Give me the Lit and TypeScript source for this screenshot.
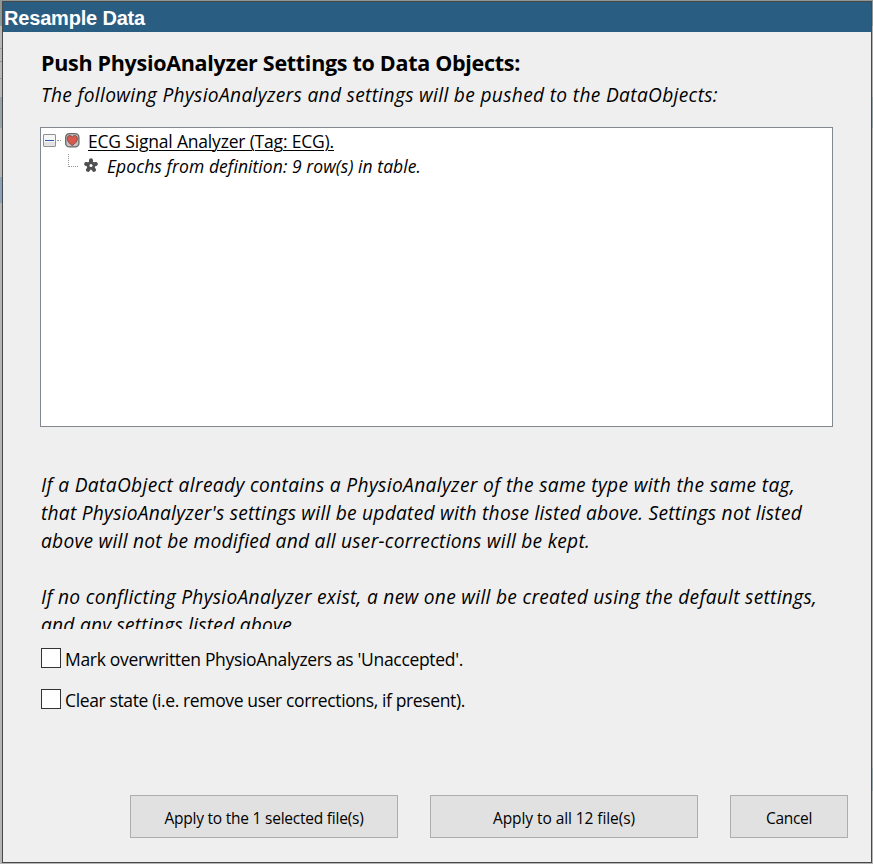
import { LitElement, html, css, svg } from "lit";
import { customElement, property } from "lit/decorators.js";

/** A single line of text, tracked so that it spans a given width. */
@customElement("text-line")
class TextLine extends LitElement {
  @property({ type: Number }) span = 0;

  static styles = css`
    :host { display: block; white-space: nowrap; }
    .line { display: inline-block; white-space: pre; }
  `;

  render() {
    return html`<span class="line"><slot></slot></span>`;
  }

  firstUpdated() {
    const line = this.renderRoot.querySelector(".line") as HTMLElement;
    const count = (this.textContent ?? "").trim().length;
    if (!this.span || !count) return;
    const spacing = (this.span - line.getBoundingClientRect().width) / count;
    line.style.letterSpacing = `${spacing.toFixed(4)}px`;
  }
}

@customElement("check-option")
class CheckOption extends LitElement {
  @property() label = "";
  @property({ type: Number }) span = 0;

  static styles = css`
    :host { display: flex; align-items: center; height: 24px; gap: 4px; }
    .box { box-sizing: border-box; width: 20px; height: 20px; border: 1px solid #333; background: #fff; margin-top: -3px; }
    .text { font-size: 17.5px; line-height: 24px; }
  `;

  render() {
    return html`<span class="box"></span><text-line class="text" .span=${this.span}>${this.label}</text-line>`;
  }
}

@customElement("push-button")
class PushButton extends LitElement {
  @property() label = "";
  @property({ type: Number }) span = 0;

  static styles = css`
    :host {
      box-sizing: border-box; display: flex; align-items: center; justify-content: center;
      height: 43px; border: 1px solid #adadad; background: #e1e1e1;
      font-size: 15.5px; line-height: 22px; padding-top: 2px;
    }
  `;

  render() {
    return html`<text-line .span=${this.span}>${this.label}</text-line>`;
  }
}

const toggle = svg`
  <rect x="0.5" y="0.5" width="12" height="12" rx="0.5" fill="#f6f6f6" stroke="#919191"/>
  <path d="M1 8h11v4H1z" fill="#e2e2e2"/>
  <path d="M2 6h9v1H2z" fill="#2f57b0"/>`;

const heart = svg`
  <rect x="0.7" y="0.7" width="13.2" height="13.2" rx="3.6" fill="#c4c4c4" stroke="#686868" stroke-width="1.3"/>
  <path d="M7.3 12.6C4.8 10.8 2.2 8.5 2.2 5.6 2.2 3.6 3.4 2.6 4.8 2.6c1.1 0 2 .6 2.5 1.6.5-1 1.4-1.6 2.5-1.6 1.4 0 2.6 1 2.6 3 0 2.9-2.6 5.2-5.1 7z" fill="#db584c" stroke="#75453f" stroke-width=".9"/>`;

const flower = svg`
  <g stroke="#505050" stroke-width="4" stroke-linecap="round">
    <path d="M7 7.4V2.2M7 7.4L2.2 6M7 7.4L11.8 6M7 7.4L4 11.8M7 7.4L10 11.8"/>
  </g>
  <circle cx="7" cy="7.4" r="4.2" fill="#505050"/>
  <circle cx="7" cy="7.4" r="1.5" fill="#fff"/>`;

@customElement("app-root")
class AppRoot extends LitElement {
  static styles = css`
    :host {
      box-sizing: border-box; display: block; width: 873px; height: 864px; overflow: hidden;
      padding: 1px 1px 1px 2px; color: #000;
      font-family: "Open Sans", "Noto Sans", sans-serif;
      background:
        linear-gradient(#8e9898 0 26px, #b0b0b0 26px 97px, #96a3a6 97px 128px, #b2b2b2 128px 768px, #96a8ac 768px 791px, #b5b5b5 791px) right / 1px 100% no-repeat,
        linear-gradient(#8e9898 0 26px, #b8b8b8 26px 48px, #999 48px 49px, #b8b8b8 49px 61px, #929292 61px 62px,
        #b8b8b8 62px 78px, #999 78px 79px, #b8b8b8 79px 97px, #96a3aa 97px 128px, #b5b5b5 128px 177px, #88a2b9 177px 203px, #b5b5b5 203px);
    }
    .window {
      box-sizing: border-box; height: 862px; border: 1px solid #484848; background: #efefef;
      display: flex; flex-direction: column;
    }
    .title {
      height: 30px; flex: none; background: #295e82; color: #fff; padding: 1px 0 0 1px; box-sizing: border-box;
      font: bold 20px/30px "Liberation Sans", sans-serif;
    }
    .body { flex: 1; display: flex; flex-direction: column; padding: 15px 23px 24px 37px; }
    .heading { font-size: 21.5px; line-height: 32px; font-weight: 700; padding-left: 1px; }
    .intro { font-size: 19.2px; line-height: 32px; font-style: italic; padding-left: 1px; }
    .tree {
      box-sizing: border-box; width: 793px; height: 300px; margin-top: 16px; flex: none;
      border: 1px solid #828790; background: #fff; padding-top: 1px; font-size: 17.5px; line-height: 25px;
    }
    .row { display: flex; height: 25px; align-items: flex-start; }
    .row svg { display: block; flex: none; }
    .toggle { margin: 5px 0 0 2px; }
    .dots { width: 4px; border-top: 1px dotted #999; margin-top: 11px; margin-left: 1px; }
    .heart { margin: 4px 0 0 4px; }
    .name { margin-left: 8px; }
    .name u { text-decoration-thickness: 1px; text-underline-offset: 2px; }
    .elbow { box-sizing: border-box; width: 10px; height: 13px; margin-left: 27px; border: dotted #999; border-width: 0 0 1px 1px; }
    .flower { margin: 4px 0 0 6px; }
    .detail { margin-left: 9px; font-style: italic; }
    .note {
      height: 158px; overflow: hidden; margin-top: 44px; padding-left: 1px; flex: none;
      font-size: 19.2px; line-height: 28px; font-style: italic;
    }
    .gap { height: 28px; }
    .options { display: flex; flex-direction: column; gap: 17px; padding: 18px 0 0 1px; }
    .buttons { display: flex; justify-content: flex-end; gap: 32px; margin-top: auto; }
    .wide { width: 268px; }
    .small { width: 118px; }
  `;

  render() {
    return html`
      <div class="window">
        <div class="title"><text-line span="141">Resample Data</text-line></div>
        <div class="body">
          <text-line class="heading" span="479">Push PhysioAnalyzer Settings to Data Objects:</text-line>
          <text-line class="intro" span="677">The following PhysioAnalyzers and settings will be pushed to the DataObjects:</text-line>
          <div class="tree">
            <div class="row">
              <svg class="toggle" width="13" height="13">${toggle}</svg>
              <span class="dots"></span>
              <svg class="heart" width="15" height="15">${heart}</svg>
              <text-line class="name" span="246"><u>ECG Signal Analyzer (Tag: ECG).</u></text-line>
            </div>
            <div class="row">
              <span class="elbow"></span>
              <svg class="flower" width="14" height="15">${flower}</svg>
              <text-line class="detail" span="314">Epochs from definition: 9 row(s) in table.</text-line>
            </div>
          </div>
          <div class="note">
            <text-line span="754">If a DataObject already contains a PhysioAnalyzer of the same type with the same tag,</text-line>
            <text-line span="761">that PhysioAnalyzer's settings will be updated with those listed above. Settings not listed</text-line>
            <text-line span="549">above will not be modified and all user-corrections will be kept.</text-line>
            <div class="gap"></div>
            <text-line span="776">If no conflicting PhysioAnalyzer exist, a new one will be created using the default settings,</text-line>
            <text-line span="256">and any settings listed above.</text-line>
          </div>
          <div class="options">
            <check-option label="Mark overwritten PhysioAnalyzers as 'Unaccepted'." span="398"></check-option>
            <check-option label="Clear state (i.e. remove user corrections, if present)." span="400"></check-option>
          </div>
          <div class="buttons">
            <push-button class="wide" label="Apply to the 1 selected file(s)" span="199"></push-button>
            <push-button class="wide" label="Apply to all 12 file(s)" span="142"></push-button>
            <push-button class="small" label="Cancel" span="46"></push-button>
          </div>
        </div>
      </div>
    `;
  }
}
